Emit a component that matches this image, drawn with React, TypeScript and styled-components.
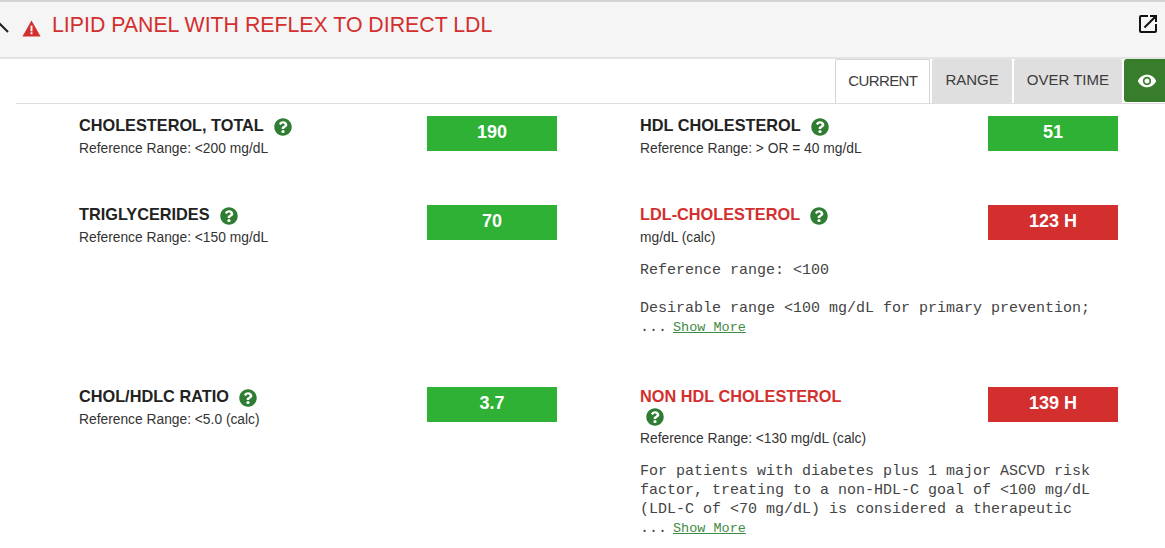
import React from "react";
import styled, { createGlobalStyle } from "styled-components";
import { MdOpenInNew, MdVisibility } from "react-icons/md";
import { FaQuestionCircle } from "react-icons/fa";

const Global = createGlobalStyle`
  html, body { margin: 0; padding: 0; background: #fff; }
  body { width: 1165px; height: 548px; overflow: hidden; font-family: "Liberation Sans", Arial, sans-serif; }
`;

const Panel = styled.div`
  width: 1165px;
  height: 548px;
  overflow: hidden;
  background: #fff;
`;

const Header = styled.header`
  height: 55px;
  box-sizing: content-box;
  border-top: 2px solid #d4d4d4;
  border-bottom: 2px solid #e4e4e4;
  background: #f5f5f5;
  display: flex;
  align-items: center;
`;

const Chevron = styled.svg`
  width: 9px;
  height: 12px;
  margin-top: -5px;
  flex: none;
`;

const WarnIcon = styled.svg`
  width: 19px;
  height: 17px;
  margin-left: 13px;
  margin-top: -3px;
  flex: none;
`;

const PanelTitle = styled.h1`
  margin: -9px 0 0 11px;
  flex: 1;
  font-size: 21.3px;
  font-weight: 400;
  line-height: 28px;
  color: #d32f2f;
`;

const External = styled.span`
  display: flex;
  margin: -11px 5px 0 0;
  font-size: 24px;
  color: #111;
`;

const TabBar = styled.nav`
  margin-left: 16px;
  height: 44px;
  border-bottom: 1px solid #dedede;
  display: flex;
  justify-content: flex-end;
  gap: 2px;
`;

const Tab = styled.button<{ $active?: boolean }>`
  height: 44px;
  box-sizing: border-box;
  padding: 0 ${(p) => (p.$active ? "12px" : "13px")} 2px;
  font: 400 15px/20px "Liberation Sans", Arial, sans-serif;
  letter-spacing: ${(p) => (p.$active ? "-0.6px" : "0")};
  color: #3c3c3c;
  border-radius: 2px 2px 0 0;
  background: ${(p) => (p.$active ? "#fff" : "#dfdfdf")};
  border: ${(p) => (p.$active ? "1px solid #d4d4d4" : "none")};
  border-bottom: none;
`;

const EyeTab = styled.button`
  width: 41px;
  height: 43px;
  padding: 0 0 0 5px;
  border: none;
  border-radius: 3px 0 0 3px;
  background: #377d2b;
  color: #fff;
  font-size: 20px;
  display: flex;
  align-items: center;
  justify-content: center;
`;

const Results = styled.main`
  display: grid;
  grid-template-columns: 478px 478px;
  column-gap: 83px;
  row-gap: 47px;
  padding: 12px 0 0 79px;
`;

const Item = styled.section`
  min-width: 0;
`;

const Top = styled.div`
  display: flex;
  justify-content: space-between;
  align-items: flex-start;
`;

const Info = styled.div`
  width: 300px;
`;

const Name = styled.h2<{ $high?: boolean }>`
  margin: 0;
  max-width: 224px;
  font-size: 16.3px;
  font-weight: 700;
  line-height: 19px;
  color: ${(p) => (p.$high ? "#d32f2f" : "#222")};
`;

const Help = styled(FaQuestionCircle)`
  margin: -4px 0 -4px 6px;
  font-size: 18px;
  color: #2e7d32;
  vertical-align: -1px;
`;

const Reference = styled.div`
  margin-top: 4px;
  font-size: 13.8px;
  line-height: 19px;
  color: #333;
`;

const Value = styled.div<{ $high?: boolean }>`
  width: 130px;
  height: 35px;
  background: ${(p) => (p.$high ? "#d32f2f" : "#2eb135")};
  color: #fff;
  font-size: 18px;
  font-weight: 700;
  line-height: 33px;
  text-align: center;
`;

const Note = styled.pre`
  margin: 14px 0 3px;
  font: 400 15px/19px "Liberation Mono", "Courier New", monospace;
  color: #444;
  white-space: pre;
`;

const More = styled.a`
  margin-left: 6px;
  font-size: 13.5px;
  color: #3f8a45;
  text-decoration: underline;
`;

type Row = {
  name: string;
  range: string;
  value: string;
  high?: boolean;
  note?: string;
};

const rows: Row[] = [
  { name: "CHOLESTEROL, TOTAL", range: "Reference Range: <200 mg/dL", value: "190" },
  { name: "HDL CHOLESTEROL", range: "Reference Range: > OR = 40 mg/dL", value: "51" },
  { name: "TRIGLYCERIDES", range: "Reference Range: <150 mg/dL", value: "70" },
  {
    name: "LDL-CHOLESTEROL",
    range: "mg/dL (calc)",
    value: "123 H",
    high: true,
    note: "Reference range: <100\n\nDesirable range <100 mg/dL for primary prevention;\n...",
  },
  { name: "CHOL/HDLC RATIO", range: "Reference Range: <5.0 (calc)", value: "3.7" },
  {
    name: "NON HDL CHOLESTEROL",
    range: "Reference Range: <130 mg/dL (calc)",
    value: "139 H",
    high: true,
    note: "For patients with diabetes plus 1 major ASCVD risk\nfactor, treating to a non-HDL-C goal of <100 mg/dL\n(LDL-C of <70 mg/dL) is considered a therapeutic\n...",
  },
];

export default function App() {
  return (
    <Panel>
      <Global />
      <Header>
        <Chevron viewBox="0 0 9 12">
          <path d="M-2 1 L8 11" stroke="#222" strokeWidth="2.2" fill="none" />
        </Chevron>
        <WarnIcon viewBox="0 0 20 18">
          <path d="M10 .5 L19.6 17.5 H.4 Z" fill="#d32f2f" />
          <rect x="9" y="6" width="2" height="6" fill="#fff" />
          <rect x="9" y="13" width="2" height="2" fill="#fff" />
        </WarnIcon>
        <PanelTitle>LIPID PANEL WITH REFLEX TO DIRECT LDL</PanelTitle>
        <External>
          <MdOpenInNew />
        </External>
      </Header>
      <TabBar>
        <Tab $active>CURRENT</Tab>
        <Tab>RANGE</Tab>
        <Tab>OVER TIME</Tab>
        <EyeTab>
          <MdVisibility />
        </EyeTab>
      </TabBar>
      <Results>
        {rows.map((r) => (
          <Item key={r.name}>
            <Top>
              <Info>
                <Name $high={r.high}>
                  {r.name} <Help />
                </Name>
                <Reference>{r.range}</Reference>
              </Info>
              <Value $high={r.high}>{r.value}</Value>
            </Top>
            {r.note && (
              <Note>
                {r.note}
                <More>Show More</More>
              </Note>
            )}
          </Item>
        ))}
      </Results>
    </Panel>
  );
}
